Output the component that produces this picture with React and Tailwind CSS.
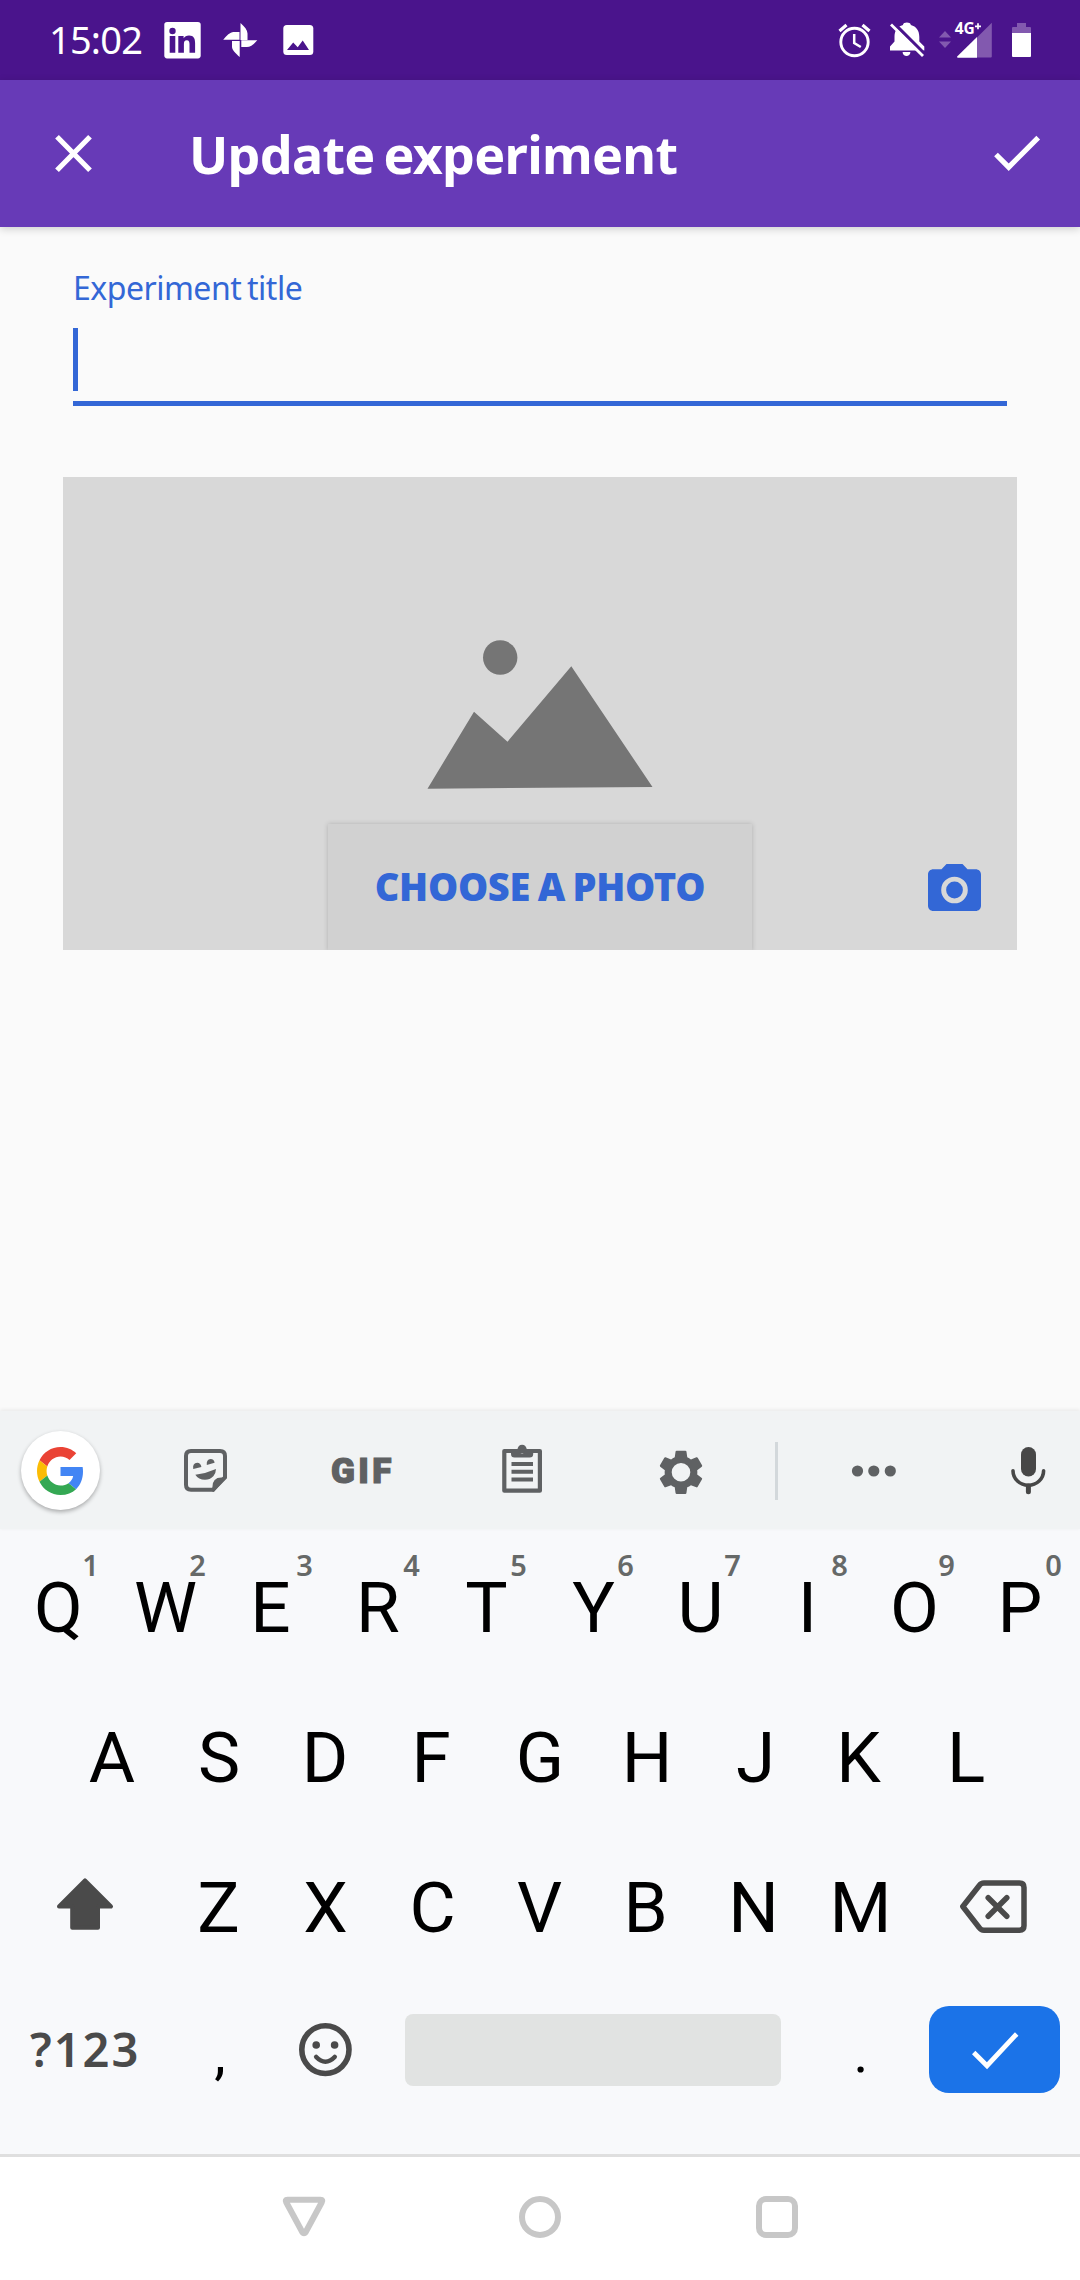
import React from "react";

function Glyph({ box, className, children }) {
  const [, , w, h] = box;
  return (
    <svg width={w} height={h} viewBox={box.join(" ")} className={"block shrink-0 " + (className || "")} aria-hidden="true">
      {children}
    </svg>
  );
}

function StatusBar() {
  return (
    <div className="flex h-20 items-center bg-[#4a148c] pl-[49px] text-white">
      <span className="w-[115px] pb-[2px] whitespace-nowrap font-['Noto_Sans',sans-serif] text-[38px] leading-[78px] tracking-[-0.8px]">15:02</span>
      <Glyph box={[164, 20, 37, 40]}>
        <rect x="164.300" y="22" width="36.400" height="36.400" rx="2.800" fill="#fff" />
        <g fill="#4a148c">
          <circle cx="172.500" cy="31" r="3.200" />
          <path d="M169.700 36h5.600v16.700h-5.600zM178.300 36h5.300v2.300c.9-1.600 2.900-2.800 5.400-2.800 4.900 0 6.100 3.100 6.100 7.800v9.400h-5.600v-8.500c0-2.100-.4-3.900-2.700-3.900-2.200 0-2.900 1.600-2.900 3.900v8.500h-5.600z" />
        </g>
      </Glyph>
      <Glyph box={[223, 20, 35, 40]} className="ml-[22px]">
        <path fill="#fff" d="M240.500 23c4 3.500 7 7 7 10.500V40h-7zM257.300 40.300c-3.500 4-7 6.800-10.500 6.800h-5.500v-6.800zM239.700 57c-4-3.500-7.700-6.700-7.700-10.200V41h7.700zM223.200 39.700c3.500-4 6.800-7.700 10.300-7.700h6v7.700z" />
      </Glyph>
      <Glyph box={[283, 20, 31, 40]} className="ml-[25px]">
        <rect x="283.300" y="25" width="30" height="30" rx="3.500" fill="#fff" />
        <path fill="#4a148c" d="M287 50l6.200-7.500 4.500 4.800 5-6.800L309 50z" />
      </Glyph>
      <div className="mr-[48px] ml-auto flex items-center">
        <Glyph box={[838, 20, 33, 40]}>
          <g fill="none" stroke="#fff">
            <circle cx="854.500" cy="42" r="13.700" strokeWidth="2.900" />
            <path d="M854.200 34v9l6.600 4" strokeWidth="2.500" />
            <path d="M839.500 31l7-6M869.500 31l-7-6" strokeWidth="3.200" />
          </g>
        </Glyph>
        <Glyph box={[889, 20, 36, 40]} className="ml-[18px]">
          <path fill="#fff" d="M890 50.500v-4l4.500-5V37c0-6.500 3-10.500 8.500-12v-.2c.3-3 7.500-3 7.800 0v.2c5.500 1.500 8.500 5.500 8.500 12v4.500l5 5v4zM902.600 52h7.800c0 5.300-7.800 5.300-7.800 0z" />
          <path d="M893 22.500l33 33" stroke="#4a148c" strokeWidth="3.500" />
          <path d="M891 24.500l32 31.500" stroke="#fff" strokeWidth="2.800" />
        </Glyph>
        <Glyph box={[938, 10, 55, 60]} className="ml-[13px]">
          <path fill="#8259af" d="M939 37.500l6-6.500 6 6.500zM939 41.500l6 6.500 6-6.500z" />
          <path fill="#8259af" d="M977 37.500l14.800-14.800V56.500q0 1-1 1H977z" />
          <path fill="#fff" d="M977 37v20.800h-19c-1 0-1.300-.8-.6-1.500z" />
          <text x="954.800" y="34" fontFamily="Noto Sans, sans-serif" fontSize="15.500" fontWeight="700" fill="#fff" textLength="20">4G</text>
          <path d="M975 26.300h6M978 23.300v6" stroke="#fff" strokeWidth="1.700" />
        </Glyph>
        <Glyph box={[1011, 20, 21, 40]} className="ml-[18px]">
          <path fill="#8259af" d="M1012 34v-6q0-1 1-1h4v-4h9v4h4q1 0 1 1v6z" />
          <path fill="#fff" d="M1012 33h19v23q0 1-1 1h-17q-1 0-1-1z" />
        </Glyph>
      </div>
    </div>
  );
}

function AppBar() {
  return (
    <div className="relative z-10 flex h-[147px] items-center bg-[#673ab7] pl-[53px] text-white shadow-[0_2px_8px_rgba(0,0,0,0.18)]">
      <Glyph box={[53, 133, 41, 41]}>
        <path d="M57 136.700l33 33.500M90 136.700l-33 33.500" stroke="#fff" strokeWidth="5.200" />
      </Glyph>
      <h1 className="ml-[95px] whitespace-nowrap font-['Noto_Sans',sans-serif] text-[52px] leading-[72px] font-bold tracking-[-0.7px] [word-spacing:-4px]">Update experiment</h1>
      <Glyph box={[992, 133, 50, 41]} className="mr-[38px] ml-auto">
        <path d="M996 154.500l12.700 12.700 29.500-29.500" fill="none" stroke="#fff" strokeWidth="5.200" />
      </Glyph>
    </div>
  );
}

function Form() {
  return (
    <div className="flex h-[1184px] flex-col bg-[#fafafa] pt-[36px]">
      <label className="ml-[73px] flex flex-col">
        <span className="h-[48px] font-['Noto_Sans',sans-serif] text-[32px] leading-[49px] tracking-[-0.5px] text-[#3367d6] [word-spacing:-2px]">Experiment title</span>
        <span className="mt-[17px] h-[63px] w-[5px] bg-[#3367d6]" />
        <span className="mt-[10px] h-[5px] w-[934px] bg-[#3367d6]" />
      </label>
      <div className="mt-[71px] ml-[63px] flex h-[473px] w-[954px] flex-col items-center overflow-hidden bg-[#d8d8d8]">
        <Glyph box={[427, 639, 226, 151]} className="mt-[162px]">
          <circle cx="500.200" cy="657.500" r="17.200" fill="#757575" />
          <path fill="#757575" d="M427.500 788.700L474 711.700l33.500 30 63.800-75.500L652.500 787z" />
        </Glyph>
        <div className="mt-[34px] grid w-full grid-cols-[1fr_424px_1fr]">
          <span />
          <button className="h-[127px] bg-[#d1d1d1] pb-[3px] font-['Noto_Sans',sans-serif] text-[38px] leading-[124px] font-black tracking-[-0.3px] whitespace-nowrap text-[#3367d6] shadow-[0_0_5px_rgba(0,0,0,0.18)] [word-spacing:-2px]">CHOOSE A PHOTO</button>
          <Glyph box={[927, 862, 57, 50]} className="mt-[38px] ml-[175px]">
            <path fillRule="evenodd" fill="#3367d6" d="M946.500 864h16l5 5.300h8c3.300 0 5.500 2.200 5.500 5.500v30.700c0 3.300-2.200 5.500-5.500 5.500h-42c-3.300 0-5.500-2.200-5.500-5.500v-30.700c0-3.300 2.200-5.500 5.500-5.500h8zM954.500 876.700a13.300 13.300 0 1 0 0 26.600 13.300 13.300 0 1 0 0-26.600z" />
            <circle cx="954.500" cy="890" r="8.400" fill="#3367d6" />
          </Glyph>
        </div>
      </div>
    </div>
  );
}

function Toolbar() {
  const c = "#5f6163";
  return (
    <div className="relative flex h-[118px] items-center bg-[#f1f3f4] pt-[2px] pl-[21px] shadow-[0_-1px_4px_rgba(0,0,0,0.08)]">
      <div className="mb-px flex h-[79px] w-[79px] items-center justify-center rounded-full bg-white shadow-[0_2px_4px_rgba(0,0,0,0.3)]">
        <svg width="47" height="48" viewBox="0 0 48 48" preserveAspectRatio="none" aria-hidden="true">
          <path fill="#EA4335" d="M24 9.500c3.540 0 6.710 1.220 9.210 3.600l6.850-6.850C35.900 2.380 30.470 0 24 0 14.620 0 6.510 5.380 2.560 13.220l7.980 6.190C12.430 13.720 17.740 9.500 24 9.500z" />
          <path fill="#4285F4" d="M46.980 24.550c0-1.570-.15-3.090-.38-4.550H24v9.020h12.940c-.58 2.960-2.260 5.480-4.780 7.180l7.730 6c4.510-4.180 7.090-10.360 7.090-17.650z" />
          <path fill="#FBBC05" d="M10.530 28.590c-.48-1.450-.76-2.990-.76-4.590s.27-3.140.76-4.590l-7.980-6.190C.92 16.460 0 20.120 0 24c0 3.880.92 7.540 2.560 10.780l7.970-6.190z" />
          <path fill="#34A853" d="M24 48c6.480 0 11.930-2.130 15.890-5.810l-7.730-6c-2.150 1.450-4.920 2.300-8.160 2.300-6.260 0-11.570-4.220-13.470-9.910l-7.980 6.190C6.510 42.620 14.620 48 24 48z" />
        </svg>
      </div>
      <Glyph box={[183, 1446, 45, 50]} className="ml-[83px]">
        <path d="M186 1456q0-5 5-5h29q5 0 5 5v21.500l-12 12.300h-22q-5 0-5-5z" fill="none" stroke={c} strokeWidth="4" />
        <path fill={c} d="M226.500 1477.500l-12.500 14.200h-1.600v-4.500q0-9.700 9-9.700zM195.300 1474.800q10.500-1.200 20.700-5.800 0 4-2.700 7.200-3.400 3.600-8.300 3.600-6.500 0-9.700-5zM193.200 1469q-.8-6 4-6.200 3.700.2 4.200 4.200zM206.800 1465q-.6-5.700 3.800-6 3.600 0 4 3.800z" />
      </Glyph>
      <span className="ml-[103px] w-[65px] pt-px font-['Roboto',sans-serif] text-[35px] leading-[40px] font-black tracking-[3.4px] text-[#5f6163] [-webkit-text-stroke:1.2px_#5f6163]">GIF</span>
      <Glyph box={[501, 1445, 42, 52]} className="ml-[105px] overflow-visible">
        <path fill="none" stroke={c} strokeWidth="4.200" strokeLinejoin="round" d="M504.300 1451h35.600v39.700h-35.600z" />
        <path fillRule="evenodd" fill={c} d="M511 1450h6.200q1-5.200 4.900-5.200t4.900 5.200h6.200v4q0 3.500-3.500 3.500h-15.200q-3.500 0-3.500-3.500zM522.100 1448.900a2.300 2.300 0 1 0 0 4.600 2.300 2.300 0 1 0 0-4.600z" />
        <path d="M511.500 1464h21.500M511.500 1471.800h21.500M511.500 1479.500h21.500" stroke={c} strokeWidth="4" />
      </Glyph>
      <Glyph box={[657, 1445, 48, 52]} className="ml-[114px]">
        <g transform="translate(681 1472.300) scale(2.270 2.250) translate(-12 -12)">
          <path fill={c} d="M19.140 12.940c.04-.3.060-.61.060-.94 0-.32-.02-.64-.07-.94l2.030-1.580a.49.490 0 0 0 .12-.61l-1.920-3.320a.488.488 0 0 0-.59-.22l-2.390.96c-.5-.38-1.030-.7-1.620-.94l-.36-2.540a.484.484 0 0 0-.48-.41h-3.840c-.24 0-.43.17-.47.410l-.36 2.540c-.59.24-1.130.57-1.620.94l-2.390-.96c-.22-.08-.47 0-.59.220L2.740 8.870c-.12.210-.08.470.12.610l2.030 1.580c-.05.3-.09.630-.09.940s.020.640.070.940l-2.030 1.580a.49.490 0 0 0-.12.610l1.920 3.320c.12.220.37.290.59.220l2.390-.96c.5.380 1.030.7 1.620.94l.36 2.540c.05.240.24.410.48.410h3.840c.24 0 .44-.17.470-.41l.36-2.540c.59-.24 1.130-.56 1.620-.94l2.390.96c.22.080.47 0 .59-.22l1.920-3.320c.12-.22.070-.47-.12-.61zM12 16.100a4.100 4.100 0 1 1 0-8.200 4.100 4.100 0 0 1 0 8.200z" />
        </g>
      </Glyph>
      <span className="ml-[70px] h-[58px] w-[3px] bg-[#d3d8db]" />
      <Glyph box={[851, 1463, 46, 16]} className="ml-[73px]">
        <circle cx="857.500" cy="1471" r="5.600" fill={c} />
        <circle cx="873.800" cy="1471" r="5.600" fill={c} />
        <circle cx="890.300" cy="1471" r="5.600" fill={c} />
      </Glyph>
      <Glyph box={[1010, 1445, 37, 52]} className="ml-[113px]">
        <rect x="1021" y="1447" width="15" height="29.500" rx="7.500" fill="#474747" />
        <path d="M1013 1470.700a15.300 14.500 0 0 0 30.600 0" fill="none" stroke="#474747" strokeWidth="3.600" strokeLinecap="round" />
        <path d="M1028.400 1486v5.700" fill="none" stroke="#474747" strokeWidth="5" strokeLinecap="round" />
      </Glyph>
    </div>
  );
}

// Padding that centres the visible shape of a letter instead of its advance box.
const OPTICAL = {
  E: "pr-[4px]",
  F: "pr-[4px]",
  K: "pr-[5px]",
  L: "pr-[4px]",
  P: "pr-[3px]",
  R: "pr-[3px]",
  B: "pr-[2px]",
  D: "pr-[2px]",
  J: "pl-[3px]",
};

function Key({ letter, hint }) {
  return (
    <div className={"relative flex h-[150px] w-[107px] shrink-0 items-center justify-center font-['Roboto',sans-serif] text-[71px] leading-[150px] text-black " + (OPTICAL[letter] || "")}>
      {letter}
      {hint && (
        <span className="absolute top-[16px] left-[77px] w-[17px] text-center font-['Noto_Sans',sans-serif] text-[29px] leading-[32px] font-semibold text-[#666968]">{hint}</span>
      )}
    </div>
  );
}

function Keyboard() {
  const g = "#4a4a4a";
  return (
    <div className="h-[625px] bg-[#f8f9fb] pt-[4px]">
      <div className="flex justify-center">
        {"QWERTYUIOP".split("").map((l, i) => <Key key={l} letter={l} hint={String((i + 1) % 10)} />)}
      </div>
      <div className="flex justify-center">
        {"ASDFGHJKL".split("").map((l) => <Key key={l} letter={l} />)}
      </div>
      <div className="flex items-center">
        <Glyph box={[56, 1875, 58, 66]} className="ml-[56px]">
          <path fill={g} stroke={g} strokeWidth="4" strokeLinejoin="round" d="M85 1880.300L111 1906.500H98v21.200H72.200v-21.200H59z" />
        </Glyph>
        <div className="ml-[51px] flex">
          {"ZXCVBNM".split("").map((l) => <Key key={l} letter={l} />)}
        </div>
        <Glyph box={[958, 1875, 70, 66]} className="ml-[44px]">
          <g fill="none" stroke={g} strokeWidth="5.500" strokeLinejoin="round" strokeLinecap="round">
            <path d="M984 1883h35.500q4.500 0 4.500 4.500v38.200q0 4.500-4.500 4.500H984q-3 0-4.700-2.500l-16.500-21.200 16.500-21q1.700-2.500 4.700-2.500z" />
            <path d="M988.200 1897.700l18.600 18.600M1006.800 1897.700l-18.600 18.600" />
          </g>
        </Glyph>
      </div>
      <div className="flex h-[134px] items-center">
        <span className="ml-[30px] w-[116px] pb-[2px] whitespace-nowrap font-['Noto_Sans',sans-serif] text-[47px] leading-[64px] font-semibold tracking-[2px] text-[#4a4a4a]">?123</span>
        <span className="w-[146px] pt-[6px] pl-[2px] text-center font-['Roboto',sans-serif] text-[58px] leading-[128px] text-black">,</span>
        <Glyph box={[298, 2020, 56, 60]} className="ml-[6px]">
          <ellipse cx="325.400" cy="2049.600" rx="23.600" ry="23.900" fill="none" stroke={g} strokeWidth="5.600" />
          <circle cx="316.200" cy="2045" r="3.800" fill={g} />
          <circle cx="334.600" cy="2045" r="3.800" fill={g} />
          <path d="M316.200 2057q9.200 9.500 18.500 0" fill="none" stroke={g} strokeWidth="4.600" strokeLinecap="round" />
        </Glyph>
        <span className="ml-[51px] h-[72px] w-[376px] rounded-[8px] bg-[#e1e3e2]" />
        <span className="w-[148px] pt-[6px] pl-[12px] text-center font-['Roboto',sans-serif] text-[56px] leading-[128px] text-black">.</span>
        <span className="mb-px flex h-[87px] w-[131px] items-center justify-center rounded-[20px] bg-[#1b73e8]">
          <Glyph box={[970, 2030, 50, 41]}>
            <path d="M973.700 2053.500l13.300 13.200 29.700-31.700" fill="none" stroke="#fff" strokeWidth="4.800" />
          </Glyph>
        </span>
      </div>
    </div>
  );
}

function NavBar() {
  return (
    <div className="flex h-[126px] items-start border-t-[3px] border-[#dfdfdf] bg-white">
      <Glyph box={[281, 2194, 46, 46]} className="mt-[37px] ml-[281px]">
        <path d="M287.500 2199.700h33q2.800 0 1.300 2.600l-16.200 30q-1.600 2-3.200 0l-16.200-30q-1.400-2.600 1.300-2.600z" fill="none" stroke="#c7c7c7" strokeWidth="6" strokeLinejoin="round" />
      </Glyph>
      <Glyph box={[517, 2194, 46, 46]} className="mt-[37px] ml-[190px]">
        <circle cx="540" cy="2217" r="18" fill="none" stroke="#c7c7c7" strokeWidth="6" />
      </Glyph>
      <span className="mt-[39px] ml-[193px] h-[42px] w-[42px] rounded-[10px] border-[6px] border-[#c7c7c7]" />
    </div>
  );
}

export default function App() {
  return (
    <main className="flex h-[2280px] w-[1080px] flex-col overflow-hidden bg-[#fafafa]">
      <StatusBar />
      <AppBar />
      <Form />
      <Toolbar />
      <Keyboard />
      <NavBar />
    </main>
  );
}
